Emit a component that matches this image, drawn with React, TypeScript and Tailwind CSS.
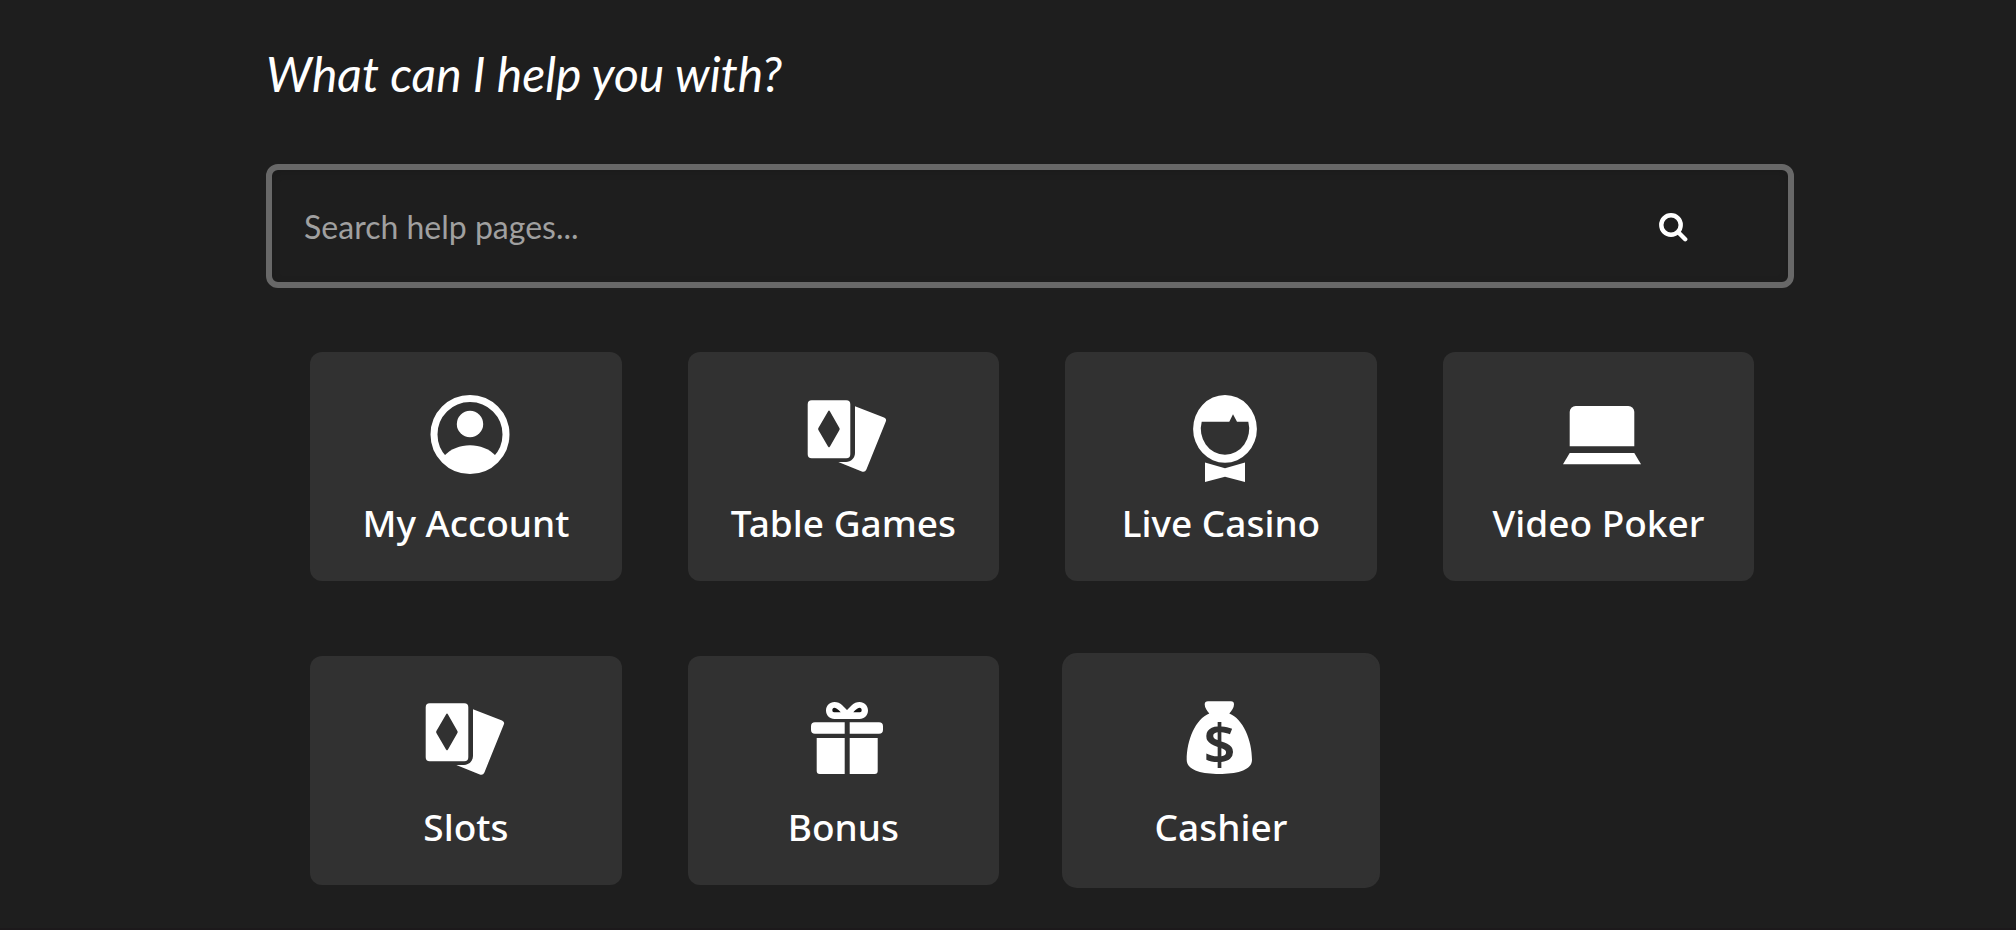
import { useState } from "react";
import type { ReactNode } from "react";

interface Category {
  label: string;
  icon: ReactNode;
  raised?: boolean;
}

function Icon({ children }: { children: ReactNode }) {
  return (
    <svg
      viewBox="0 0 88 88"
      className="h-[88px] w-[88px] fill-white"
      aria-hidden="true"
    >
      {children}
    </svg>
  );
}

const playingCards = (
  <>
    <path
      fillRule="evenodd"
      d="M12.7 6.3H47.3a4 4 0 0 1 4 4V60.3a4 4 0 0 1-4 4H12.7a4 4 0 0 1-4-4V10.3a4 4 0 0 1 4-4ZM29 17.4 19.4 34Q18.8 35 19.4 36L29 52.6Q30 54.2 31 52.6L40.4 36Q41 35 40.4 34L31 17.4Q30 15.8 29 17.4Z"
    />
    <path d="M56 12.3 85 23.4Q88 24.7 86.8 27.6L67.4 75.4Q66 78.6 62.8 77.5L39.3 67.9H47C52 67.9 56 64 56 59Z" />
  </>
);

const categories: Category[] = [
  {
    label: "My Account",
    icon: (
      <Icon>
        <circle cx="48" cy="40.5" r="36" fill="none" stroke="white" strokeWidth="7" />
        <circle cx="48" cy="30" r="13.2" />
        <path d="M22.5 61.5C29 55 38 51.3 48 51.3S67 55 73.5 61.5L75 66A37 37 0 0 1 21 66Z" />
      </Icon>
    ),
  },
  {
    label: "Table Games",
    icon: <Icon>{playingCards}</Icon>,
  },
  {
    label: "Live Casino",
    icon: (
      <Icon>
        <path
          fillRule="evenodd"
          d="M48 1A31.9 33.9 0 0 1 48 68.8A31.9 33.9 0 0 1 48 1ZM24.7 27.7A24.2 26 0 0 0 48 60.7A24.2 26 0 0 0 71.3 27.7H60L56 20.2 52.3 27.7Z"
        />
        <path d="M28 68.4 48 74.2 68 68.4V88L48 82.8 28 88Z" />
      </Icon>
    ),
  },
  {
    label: "Video Poker",
    icon: (
      <Icon>
        <path d="M21.7 12H74.3a6 6 0 0 1 6 6V52.3H15.7V18a6 6 0 0 1 6-6Z" />
        <path d="M15.7 59H80.3L87 70.3H9Z" />
      </Icon>
    ),
  },
  {
    label: "Slots",
    icon: (
      <Icon>
        <g transform="translate(-5 -1)">{playingCards}</g>
      </Icon>
    ),
  },
  {
    label: "Bonus",
    icon: (
      <Icon>
        <path d="M35.5 4C30.5 4 27 8 27 12.5S30.5 21 35.5 21H60.5C65.5 21 69 17 69 12.5S65.5 4 60.5 4C57.5 4 55 5.3 53 7L48 11.9 43 7C41 5.3 38.5 4 35.5 4Z" />
        <path
          fill="#151515"
          d="M35.5 9.8C34 9.8 33.3 11 33.3 12.3Q33.3 14.3 35 14.3H41.7C39.5 12 37.5 9.8 35.5 9.8ZM60.5 9.8C62 9.8 62.7 11 62.7 12.3Q62.7 14.3 61 14.3H54.3C56.5 12 58.5 9.8 60.5 9.8Z"
        />
        <path d="M16 24.3H45.7V35.7H16a4 4 0 0 1-4-4V28.3a4 4 0 0 1 4-4ZM50.7 24.3H80a4 4 0 0 1 4 4V31.7a4 4 0 0 1-4 4H50.7Z" />
        <path d="M17.7 40H45.7V76H20.7a3 3 0 0 1-3-3ZM50.7 40H78.7V73a3 3 0 0 1-3 3H50.7Z" />
      </Icon>
    ),
  },
  {
    label: "Cashier",
    raised: true,
    icon: (
      <Icon>
        <path d="M31 3.3H54Q57 3.3 57 6.6C57 10 54.5 13 52.3 15.5C66 21 75 42 75 62C75 72 60 76 42.3 76S9.7 72 9.7 62C9.7 42 18.5 21 32.3 15.5C30.2 13 27.7 10 27.7 6.6Q27.7 3.3 31 3.3Z" />
        <text
          x="42.5"
          y="66"
          textAnchor="middle"
          className="fill-[#313131] font-['Noto_Sans',sans-serif] text-[56px] font-semibold"
        >
          $
        </text>
      </Icon>
    ),
  },
];

function CategoryCard({ label, icon, raised }: Category) {
  return (
    <a
      href="#"
      className={`flex h-[229px] flex-col items-center rounded-xl bg-[#313131] pt-[42px] ${
        raised ? "ring-3 ring-[#313131]" : ""
      }`}
    >
      {icon}
      <span className="mt-4 font-['Noto_Sans',sans-serif] text-[37px] leading-[50px] font-medium whitespace-nowrap text-white">
        {label}
      </span>
    </a>
  );
}

export default function App() {
  const [query, setQuery] = useState("");

  return (
    <main className="min-h-screen border-b-2 border-[#1c191b] bg-[#1e1e1e] pt-11 pr-[11%] pb-10 pl-[13.2%] font-[Lato,sans-serif] text-white">
      <h1 className="text-[48px] leading-[60px] italic">
        What can I help you with?
      </h1>

      <form
        onSubmit={(e) => e.preventDefault()}
        className="mt-[60px] flex h-[124px] items-center rounded-xl border-6 border-[#686868] pr-[98px] pl-8 shadow-[inset_0_2px_8px_rgba(0,0,0,0.15)]"
      >
        <input
          type="text"
          aria-label="Search help pages"
          value={query}
          onChange={(e) => setQuery(e.target.value)}
          placeholder="Search help pages..."
          className="h-full min-w-0 flex-1 bg-transparent text-[32px] outline-none placeholder:text-[#a0a0a0]"
        />
        <button type="submit" aria-label="Search">
          <svg
            viewBox="0 0 32 32"
            className="h-8 w-8 fill-none stroke-white"
            aria-hidden="true"
          >
            <circle cx="13" cy="15" r="9.7" strokeWidth="4.4" />
            <path d="M20.5 22.5 27.2 29.2" strokeWidth="4.4" strokeLinecap="round" />
          </svg>
        </button>
      </form>

      <div className="mt-16 mr-10 ml-11 grid grid-cols-1 gap-x-[66px] gap-y-[75px] sm:grid-cols-2 xl:grid-cols-4">
        {categories.map((category) => (
          <CategoryCard key={category.label} {...category} />
        ))}
      </div>
    </main>
  );
}
